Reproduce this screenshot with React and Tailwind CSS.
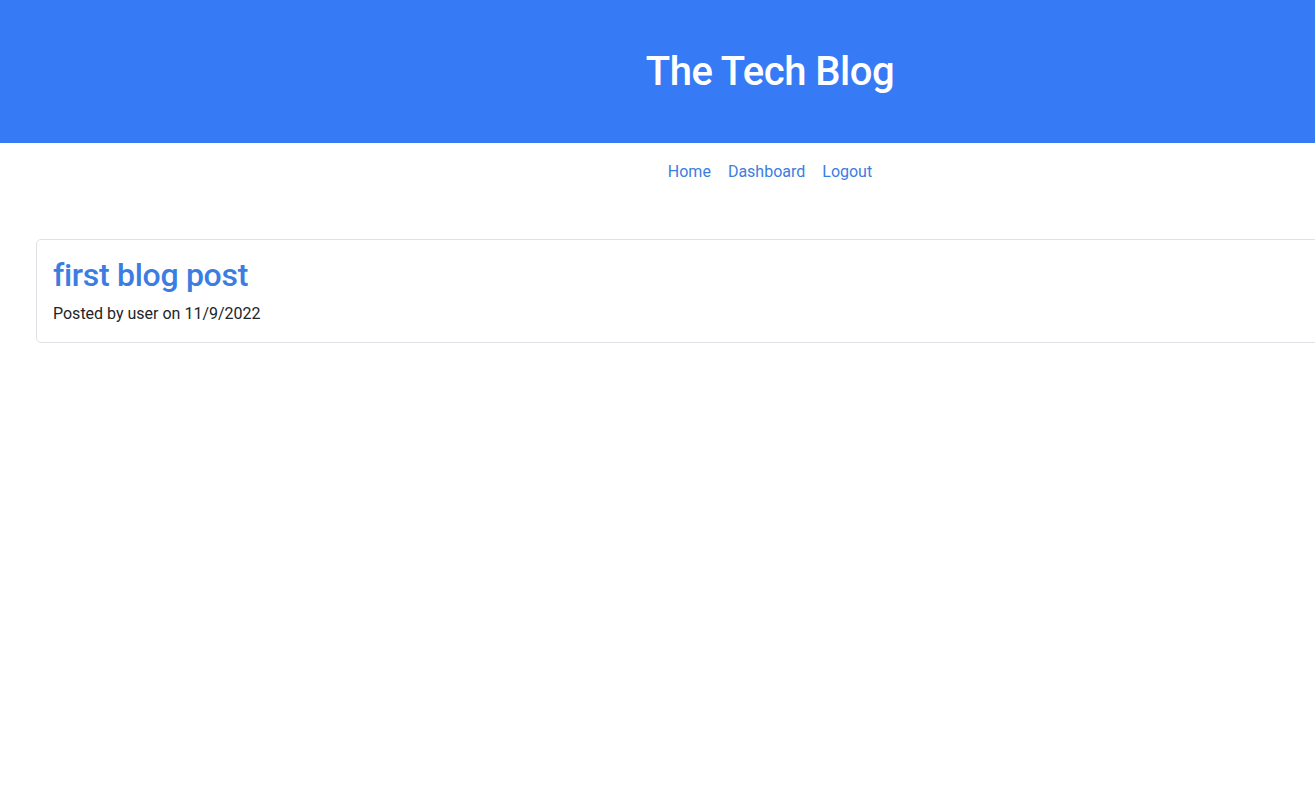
import React from 'react';

const posts = [{ id: 1, title: 'first blog post', user: 'user', date: '11/9/2022' }];

export default function App() {
  return (
    <div className="min-h-screen overflow-hidden bg-white font-['Roboto',sans-serif]">
      <div className="w-[1540px]">
        <header className="flex h-[143px] items-center justify-center bg-[#377af6]">
          <h1 className="text-[40px] font-medium tracking-[-0.5px] text-white">The Tech Blog</h1>
        </header>

        <nav className="flex justify-center gap-[17px] pt-[17px] text-[16px] text-[#3b7de0]">
          <a href="#">Home</a>
          <a href="#">Dashboard</a>
          <a href="#">Logout</a>
        </nav>

        <main className="px-9 pt-[55px]">
          {posts.map(p => (
            <div key={p.id} className="rounded-[5px] border border-[#dee2e6] px-4 pb-[16px] pt-[16px]">
              <h2 className="text-[32px] font-medium tracking-[-0.3px] leading-[1.2] text-[#3b7de0]">{p.title}</h2>
              <p className="mt-[8px] text-[16px] text-[#212529]">Posted by {p.user} on {p.date}</p>
            </div>
          ))}
        </main>
      </div>
    </div>
  );
}
